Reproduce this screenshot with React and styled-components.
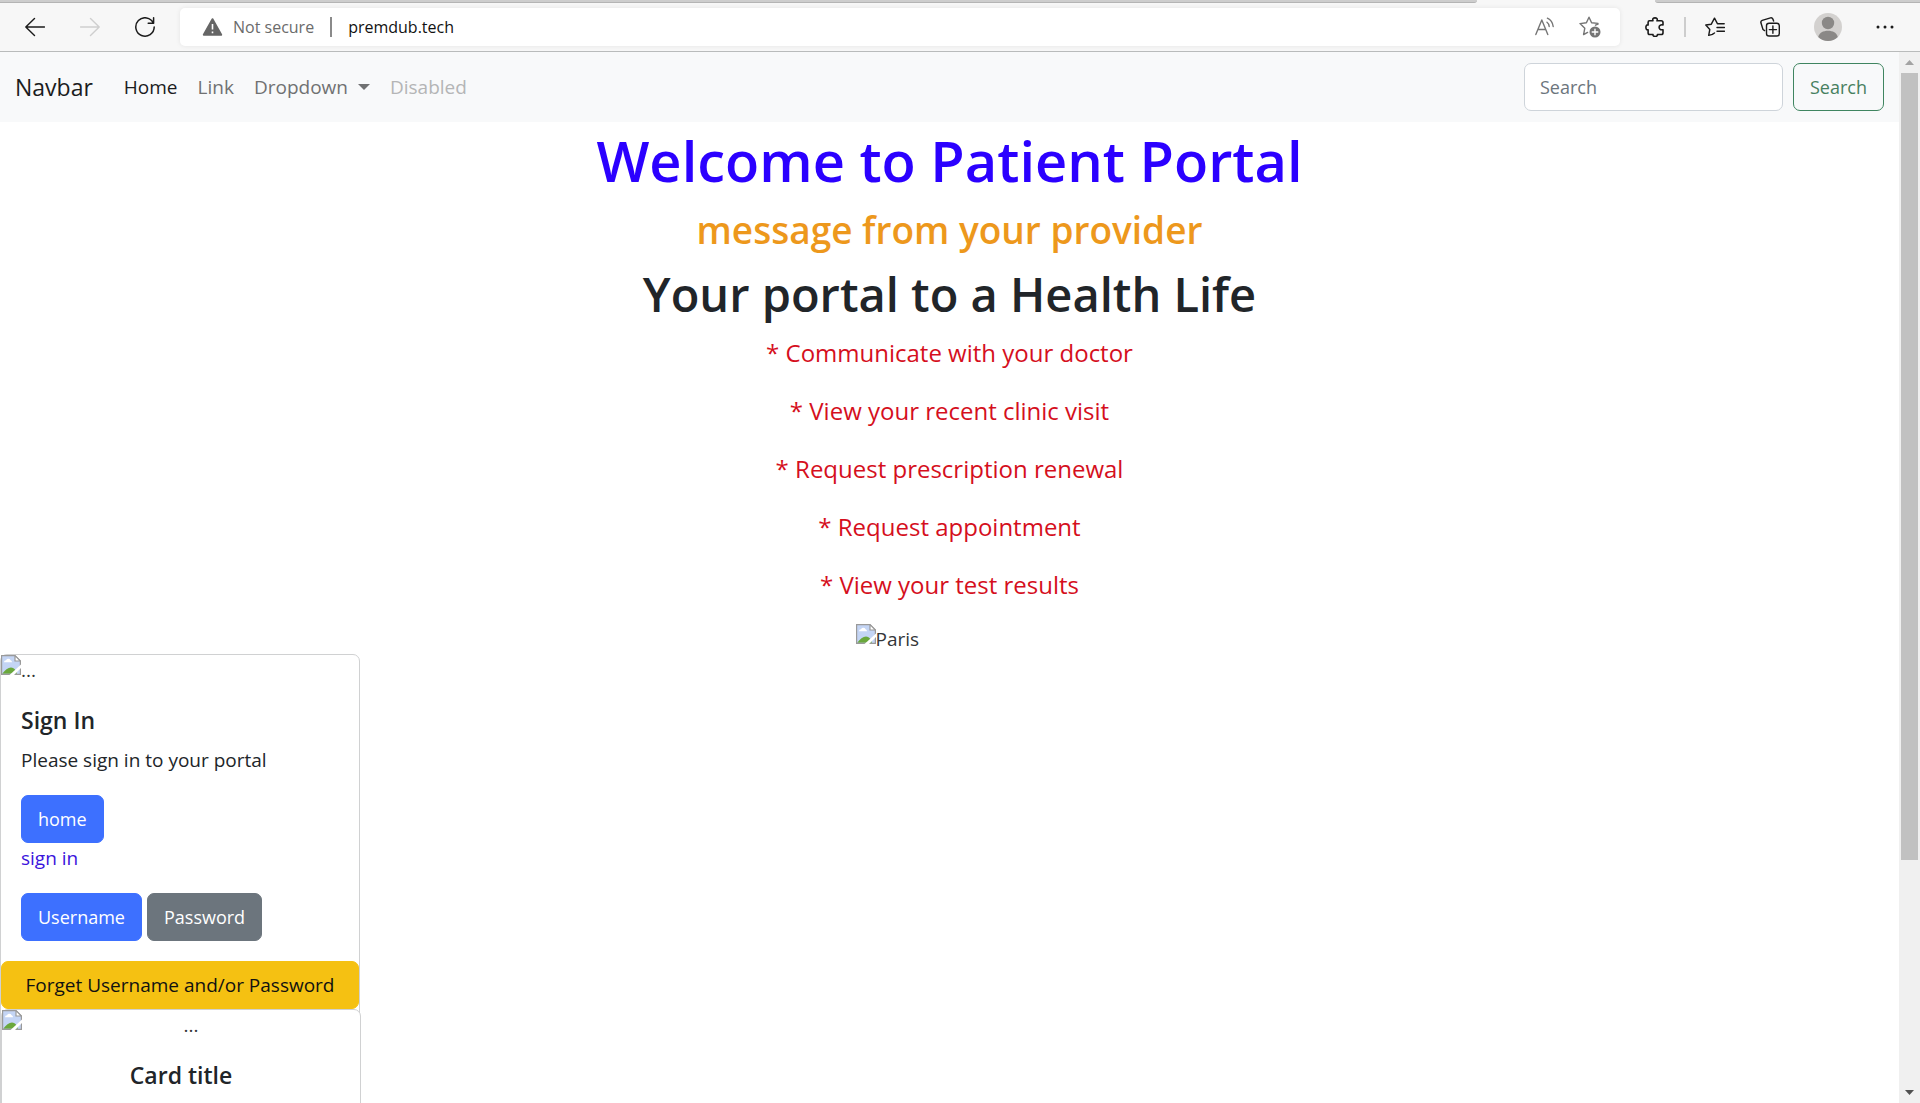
import React from "react";
import styled, { createGlobalStyle, css } from "styled-components";

const GlobalStyle = createGlobalStyle`
  *, *::before, *::after { box-sizing: border-box; }
  body {
    margin: 0;
    overflow: hidden;
    background: #fff;
    color: #212529;
    font-family: "Segoe UI", "Open Sans", "Noto Sans", sans-serif;
    font-size: 19px;
    line-height: 30px;
  }
  h1, h2, h3, p { margin: 0; padding: 0; }
  button, input { font-family: inherit; }
`;

/* ---------- browser window ---------- */

const Window = styled.div`
  display: flex;
  flex-direction: column;
  height: 100vh;
`;

const TabStrip = styled.div`
  display: flex;
  gap: 178px;
  height: 3px;
  background: #f7f7f7;
`;

const TabEdge = styled.div`
  flex: ${(p) => p.$grow || "none"};
  width: ${(p) => p.$width || "auto"};
  background: #cdcdcd;
  border-bottom: 1px solid #b4b4b4;
  border-radius: ${(p) => (p.$grow ? "0 0 4px 0" : "0 0 0 4px")};
`;

const Toolbar = styled.header`
  display: flex;
  align-items: center;
  height: 49px;
  padding: 0 20px;
  background: #f7f7f7;
  border-bottom: 1px solid #b9bbbb;
`;

const ToolGroup = styled.div`
  display: flex;
  align-items: center;
  gap: 25px;
`;

const IconButton = styled.button`
  display: flex;
  align-items: center;
  justify-content: center;
  width: ${(p) => (p.$wide ? "35px" : "30px")};
  height: 30px;
  padding: 0;
  border: 0;
  background: none;
  color: ${(p) => p.$color || "#1b1b1b"};
`;

const AddressBar = styled.div`
  display: flex;
  flex: 1;
  align-items: center;
  height: 38px;
  margin: 0 20px;
  padding: 0 15px 0 22px;
  border-radius: 5px;
  background: #fff;
  box-shadow: 0 0 5px rgba(0, 0, 0, 0.08);
  font-size: 16px;
`;

const Security = styled.span`
  display: flex;
  align-items: center;
  gap: 10px;
  padding-right: 16px;
  color: #6b6b6b;
`;

const Address = styled.input`
  flex: 1;
  min-width: 0;
  padding: 0 16px;
  border: 0;
  outline: 0;
  background: none;
  color: #111;
  font-size: 16px;
`;

const Divider = styled.span`
  width: 2px;
  height: 20px;
  background: ${(p) => p.$color};
`;

const AddressTools = styled.div`
  display: flex;
  gap: 15px;
`;

const RightTools = styled.div`
  display: flex;
  align-items: center;
  gap: 14px;
`;

const Viewport = styled.div`
  display: flex;
  flex: 1;
  min-height: 0;
`;

const Page = styled.div`
  flex: 1;
  min-width: 0;
  overflow: hidden;
`;

const ScrollBar = styled.div`
  display: flex;
  flex-direction: column;
  width: 21px;
  padding: 0 2px;
  background: #f0f0f0;
`;

const ScrollEnd = styled.div`
  display: flex;
  align-items: center;
  justify-content: center;
  height: 21px;
`;

const ScrollTrack = styled.div`
  flex: 1;
`;

const ScrollThumb = styled.div`
  height: 78%;
  background: #c1c1c1;
`;

/* ---------- site navbar ---------- */

const Navbar = styled.nav`
  display: flex;
  align-items: center;
  justify-content: space-between;
  height: 70px;
  padding: 0 15px;
  background: #f8f9fa;
`;

const NavGroup = styled.div`
  display: flex;
  align-items: center;
`;

const Brand = styled.a`
  margin-right: 21px;
  color: #1b1c1d;
  font-size: 23px;
  text-decoration: none;
`;

const navItem = css`
  display: flex;
  align-items: center;
  gap: 10px;
  padding: 10px;
  border: 0;
  background: none;
  color: ${(p) => p.$color || "#707172"};
  font-size: 19px;
  line-height: 30px;
  text-decoration: none;
`;

const NavLink = styled.a`
  ${navItem}
`;

const NavButton = styled.button`
  ${navItem}
`;

const Caret = styled.span`
  border-top: 6px solid currentColor;
  border-right: 6px solid transparent;
  border-left: 6px solid transparent;
`;

const SearchForm = styled.form`
  display: flex;
  gap: 10px;
`;

const SearchInput = styled.input`
  width: 259px;
  height: 48px;
  padding: 0 15px;
  border: 1px solid #ced4da;
  border-radius: 7px;
  background: #fff;
  color: #212529;
  font-size: 18px;
  &::placeholder { color: #6c757d; opacity: 1; }
`;

const buttonTones = {
  primary: { bg: "#3d70ff", fg: "#fff", border: "#3d70ff" },
  secondary: { bg: "#6c757d", fg: "#fff", border: "#6c757d" },
  warning: { bg: "#f5c112", fg: "#111", border: "#f5c112" },
  outline: { bg: "transparent", fg: "#47805f", border: "#3f8560" },
};

const buttonStyle = css`
  display: inline-flex;
  align-items: center;
  justify-content: center;
  height: 48px;
  padding: 0 16px;
  border: 1px solid ${(p) => buttonTones[p.$tone].border};
  border-radius: 7px;
  background: ${(p) => buttonTones[p.$tone].bg};
  color: ${(p) => buttonTones[p.$tone].fg};
  font-size: 18px;
  text-decoration: none;
`;

const Button = styled.button`
  ${buttonStyle}
`;

const ButtonLink = styled.a`
  ${buttonStyle}
`;

const WideButton = styled(Button)`
  width: 100%;
  font-size: 19px;
`;

/* ---------- page content ---------- */

const Intro = styled.section`
  display: flex;
  flex-direction: column;
  align-items: center;
  padding-top: 2px;
  text-align: center;
`;

const Welcome = styled.h1`
  margin-bottom: 10px;
  color: #2b00ff;
  font-size: 56px;
  font-weight: 600;
  line-height: 72px;
`;

const Message = styled.h2`
  margin-bottom: 10px;
  color: #ed981c;
  font-size: 37px;
  font-weight: 600;
  line-height: 48px;
`;

const Tagline = styled.h2`
  margin-bottom: 10px;
  font-size: 47px;
  font-weight: 600;
  line-height: 60px;
`;

const Feature = styled.p`
  margin-bottom: 20px;
  color: #d50f1d;
  font-size: 24px;
  line-height: 38px;
`;

const MissingImage = styled.div`
  display: flex;
  width: ${(p) => p.$width || "100%"};
  height: 30px;
  color: #343638;
`;

const AltText = styled.span`
  flex: ${(p) => (p.$centered ? 1 : "none")};
  text-align: center;
`;

const Card = styled.article`
  width: 360px;
  border: 1px solid #d0d1d2;
  border-radius: 7px;
  background: #fff;
`;

const InnerCard = styled(Card)`
  text-align: center;
`;

const CardBody = styled.div`
  padding: 20px;
`;

const CardTitle = styled.h3`
  margin-bottom: 10px;
  font-size: 23px;
  font-weight: 600;
  line-height: 30px;
`;

const CardText = styled.p`
  margin-bottom: 20px;
`;

const SignInLink = styled.a`
  display: block;
  margin-bottom: 20px;
  color: #3b14dc;
  text-decoration: none;
`;

const ButtonRow = styled.div`
  display: flex;
  gap: 5px;
`;

/* ---------- drawings ---------- */

const Icon = ({ size = 20, stroke = 1.4, children }) => (
  <svg
    width={size}
    height={size}
    viewBox={`0 0 ${size} ${size}`}
    fill="none"
    stroke="currentColor"
    strokeWidth={stroke}
    strokeLinecap="round"
    strokeLinejoin="round"
    aria-hidden="true"
  >
    {children}
  </svg>
);

const BrokenImage = () => (
  <svg width="20" height="20" viewBox="0 0 20 20" aria-hidden="true">
    <path d="M.6.6H14L19.4 6V19.4H.6Z" fill="#c4d5f5" />
    <path d="M3 7.2a2 2 0 0 1 2-2 2.6 2.6 0 0 1 4.6 0 2 2 0 0 1 1.4 2Z" fill="#fff" />
    <path d="M1.2 18.8C4 15 7 12.6 10 12.6c3 0 5 2.4 6 6.2Z" fill="#6aa83c" />
    <path d="M.6 19.4V.6H14L19.4 6V19.4Z" fill="none" stroke="#9a9a9a" strokeWidth="1.2" />
    <path d="M14 .6V6h5.4Z" fill="#fff" stroke="#9a9a9a" strokeWidth="1.2" />
    <path d="M8.5 20 20 9.5V13L13 20Z" fill="#fff" />
  </svg>
);

const Triangle = ({ up, color }) => (
  <svg width="9" height="5" viewBox="0 0 9 5" aria-hidden="true">
    <path d={up ? "M0 5 4.5 0 9 5Z" : "M0 0 4.5 5 9 0Z"} fill={color} />
  </svg>
);

const features = [
  "Communicate with your doctor",
  "View your recent clinic visit",
  "Request prescription renewal",
  "Request appointment",
  "View your test results",
];

function BrowserToolbar() {
  return (
    <Toolbar>
      <ToolGroup>
        <IconButton aria-label="Back">
          <Icon><path d="M19.5 10H.8M9.5 1.5.8 10l8.7 8.5" /></Icon>
        </IconButton>
        <IconButton aria-label="Forward" $color="#cfcfcf">
          <Icon><path d="M.5 10h18.7M10.5 1.5 19.2 10l-8.7 8.5" /></Icon>
        </IconButton>
        <IconButton aria-label="Refresh">
          <Icon stroke={1.5}><path d="M18.4 6.2A9.2 9.2 0 1 0 19.2 10M18.6.8v5.4h-5.4" /></Icon>
        </IconButton>
      </ToolGroup>
      <AddressBar>
        <Security>
          <svg width="21" height="20" viewBox="0 0 21 20" aria-hidden="true">
            <path d="M10.5 2.2 19.2 17.8H1.8Z" fill="#666" stroke="#666" strokeWidth="2" strokeLinejoin="round" />
            <path d="M10.5 7v5.6M10.5 14.6v1.6" stroke="#fff" strokeWidth="1.6" />
          </svg>
          Not secure
        </Security>
        <Divider $color="#8a8a8a" />
        <Address aria-label="Address" defaultValue="premdub.tech" />
        <AddressTools>
          <IconButton aria-label="Read aloud" $color="#757575">
            <Icon><path d="M.8 17.5 6.8 3l6 14.5M2.9 12.5h7.8M12 5.2q2 1.4 2.2 4.3M12.4 1.2q5 2.4 5.8 8.3" /></Icon>
          </IconButton>
          <IconButton aria-label="Add to favorites" $color="#757575">
            <Icon size={22}>
              <path d="M8.6 16.4 4.6 18.6 5.8 12.2 1 7.6 7.4 6.8 10 1.2 12.6 6.8 19 7.4M16.5 9.2 19 8.2" />
              <circle cx="16" cy="16" r="5.5" fill="currentColor" stroke="none" />
              <path d="M16 13.2v5.6M13.2 16h5.6" stroke="#fff" />
            </Icon>
          </IconButton>
        </AddressTools>
      </AddressBar>
      <RightTools>
        <IconButton aria-label="Extensions">
          <Icon stroke={1.6}>
            <path d="M4.5 3.8H8C7.2 1.8 8.4.9 10 .9s2.800.9 2 2.900h4.200q1.800 0 1.800 1.800v2.300c-2.600-.5-3.900.8-3.900 2.400s1.300 2.900 3.900 2.400v3q0 1.800-1.800 1.800H12.400c.4 1.300-.8 2-2.200 2s-2.600-.7-2.200-2H4.700q-1.600 0-1.600-1.800v-3C1.400 13 .9 11.800.9 10.300S1.600 7.500 3.100 8V5.400q0-1.600 1.400-1.600Z" />
          </Icon>
        </IconButton>
        <Divider $color="#cdcdcd" />
        <ToolGroup>
          <IconButton aria-label="Favorites">
            <Icon>
              <path d="M7.5 17.4 3.7 18.4 4.8 12.5.8 8l5.5-.8L9.5 1.2l2.900 5.500h6.800M12 10.500h7.500M12 14.200h7.500M7.700 17.200 9.500 16" />
            </Icon>
          </IconButton>
          <IconButton aria-label="Collections">
            <Icon>
              <path d="M4.6 13.6 3 12.5.9 5.8Q.5 4 2.2 3.4L10.5.9q1.7-.4 2.4 1.2l.7 2" />
              <rect x="6.5" y="6.2" width="12.8" height="12.8" rx="2.6" />
              <path d="M12.9 9v7.2M9.3 12.6h7.2" />
            </Icon>
          </IconButton>
          <IconButton aria-label="Profile" $wide>
            <svg width="28" height="28" viewBox="0 0 28 28" aria-hidden="true">
              <circle cx="14" cy="14" r="14" fill="#d3d1cf" />
              <circle cx="14" cy="10" r="6.2" fill="#8a8886" />
              <path d="M4.2 23.9C5.5 19.8 9 17.8 14 17.8s8.5 2 9.800 6.100A14 14 0 0 1 4.200 23.900Z" fill="#8a8886" />
            </svg>
          </IconButton>
          <IconButton aria-label="More">
            <Icon size={18}>
              <g fill="currentColor" stroke="none">
                <circle cx="2" cy="9" r="1.5" />
                <circle cx="9" cy="9" r="1.5" />
                <circle cx="16" cy="9" r="1.5" />
              </g>
            </Icon>
          </IconButton>
        </ToolGroup>
      </RightTools>
    </Toolbar>
  );
}

function SiteNavbar() {
  return (
    <Navbar>
      <NavGroup>
        <Brand href="#">Navbar</Brand>
        <NavLink href="#" $color="#1b1c1d">Home</NavLink>
        <NavLink href="#">Link</NavLink>
        <NavButton type="button" aria-haspopup="true">Dropdown<Caret /></NavButton>
        <NavLink href="#" aria-disabled="true" $color="#b4b5b6">Disabled</NavLink>
      </NavGroup>
      <SearchForm role="search">
        <SearchInput type="search" placeholder="Search" aria-label="Search" />
        <Button type="button" $tone="outline">Search</Button>
      </SearchForm>
    </Navbar>
  );
}

export default function App() {
  return (
    <Window>
      <GlobalStyle />
      <TabStrip>
        <TabEdge $grow={1} />
        <TabEdge $width="265px" />
      </TabStrip>
      <BrowserToolbar />
      <Viewport>
        <Page>
          <SiteNavbar />
          <main>
            <Intro>
              <Welcome>Welcome to Patient Portal</Welcome>
              <Message>message from your provider</Message>
              <Tagline>Your portal to a Health Life</Tagline>
              {features.map((f) => (
                <Feature key={f}>* {f}</Feature>
              ))}
              <MissingImage $width="188px">
                <BrokenImage />
                <AltText>Paris</AltText>
              </MissingImage>
            </Intro>
            <Card>
              <MissingImage>
                <BrokenImage />
                <AltText>...</AltText>
              </MissingImage>
              <CardBody>
                <CardTitle>Sign In</CardTitle>
                <CardText>Please sign in to your portal</CardText>
                <ButtonLink href="#" $tone="primary">home</ButtonLink>
                <SignInLink href="#">sign in</SignInLink>
                <ButtonRow>
                  <Button type="button" $tone="primary">Username</Button>
                  <Button type="button" $tone="secondary">Password</Button>
                </ButtonRow>
              </CardBody>
              <WideButton type="button" $tone="warning">Forget Username and/or Password</WideButton>
              <InnerCard>
                <MissingImage>
                  <BrokenImage />
                  <AltText $centered>...</AltText>
                </MissingImage>
                <CardBody>
                  <CardTitle>Card title</CardTitle>
                </CardBody>
              </InnerCard>
            </Card>
          </main>
        </Page>
        <ScrollBar aria-hidden="true">
          <ScrollEnd><Triangle up color="#a3a3a3" /></ScrollEnd>
          <ScrollTrack><ScrollThumb /></ScrollTrack>
          <ScrollEnd><Triangle color="#505050" /></ScrollEnd>
        </ScrollBar>
      </Viewport>
    </Window>
  );
}
